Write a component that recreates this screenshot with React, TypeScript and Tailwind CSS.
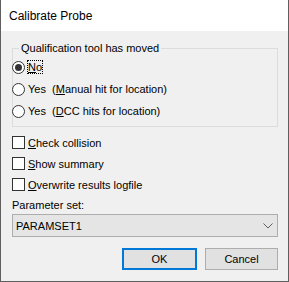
import React from "react";

const Radio = ({ checked }: { checked?: boolean }) => (
  <svg width="13" height="13" viewBox="0 0 13 13" className="shrink-0">
    <circle cx="6.5" cy="6.5" r="6" fill="white" stroke="#333333" strokeWidth="1" />
    {checked && <circle cx="6.5" cy="6.5" r="3.5" fill="#333333" />}
  </svg>
);

const Check = ({ children }: { children: React.ReactNode }) => (
  <div className="h-[21px] flex items-center">
    <span className="w-[13px] h-[13px] border border-[#333333] bg-white shrink-0" />
    <span className="ml-[3px] leading-[14px] whitespace-pre">{children}</span>
  </div>
);

export default function App() {
  return (
    <div className="w-[289px] h-[282px] border-x border-b border-[#5f5f5f] bg-[#f0f0f0] flex flex-col text-[11px] text-black font-['Liberation_Sans',Arial,sans-serif]">
      <div className="h-[31px] shrink-0 bg-white pl-[8px] pt-px flex items-center text-[12px] leading-[16px]">
        Calibrate Probe
      </div>

      <div className="pl-[11px] pr-[10px] flex flex-col">
        <fieldset className="mt-[9px] border border-[#dcdcdc] pb-[4px]">
          <legend className="ml-[6px] px-[2px] leading-[16px]">Qualification tool has moved</legend>
          <div className="h-[22px] flex items-center -ml-px">
            <Radio checked />
            <span className="ml-[2px] border border-dotted border-black leading-[12px]">
              <u className="underline-offset-[1px]">N</u>o
            </span>
          </div>
          <div className="h-[22px] flex items-center -ml-px">
            <Radio />
            <span className="ml-[3px] leading-[14px] whitespace-pre">
              Yes  (<u>M</u>anual hit for location)
            </span>
          </div>
          <div className="h-[22px] flex items-center -ml-px">
            <Radio />
            <span className="ml-[3px] leading-[14px] whitespace-pre">
              Yes  (<u>D</u>CC hits for location)
            </span>
          </div>
        </fieldset>

        <div className="mt-[5px] flex flex-col">
          <Check>
            <u>C</u>heck collision
          </Check>
          <Check>
            <u>S</u>how summary
          </Check>
          <Check>
            <u>O</u>verwrite results logfile
          </Check>
        </div>

        <div className="mt-[3px] leading-[14px]">Parameter set:</div>

        <div className="mt-[2px] h-[23px] border border-[#adadad] bg-[#e5e5e5] flex items-center justify-between pl-[3px] pr-[4px]">
          <span className="leading-[14px]">PARAMSET1</span>
          <svg width="10" height="6" viewBox="0 0 10 6">
            <path d="M0.5 0.5 L5 5 L9.5 0.5" fill="none" stroke="#606060" strokeWidth="1" />
          </svg>
        </div>

        <div className="mt-[11px] flex justify-end gap-[8px]">
          <button className="w-[75px] h-[22px] border-2 border-[#0078d7] bg-[#e1e1e1] leading-[14px]">OK</button>
          <button className="w-[73px] h-[22px] border border-[#adadad] bg-[#e1e1e1] leading-[14px]">Cancel</button>
        </div>
      </div>
    </div>
  );
}
